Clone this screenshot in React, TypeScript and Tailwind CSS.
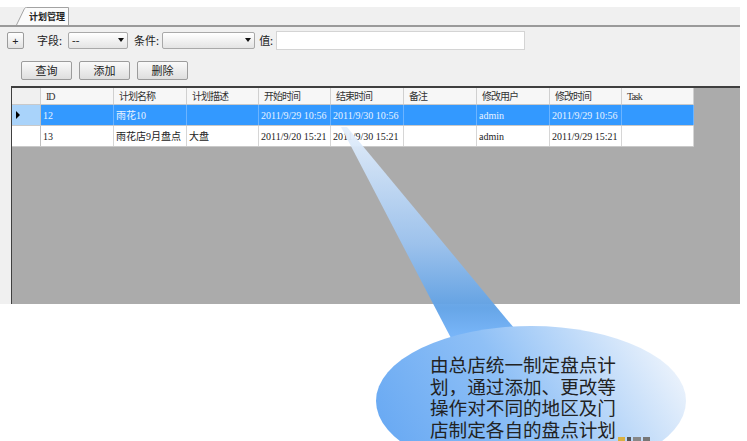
const cols = [
  { title: "ID", w: 73 },
  { title: "计划名称", w: 73 },
  { title: "计划描述", w: 72 },
  { title: "开始时间", w: 72 },
  { title: "结束时间", w: 73 },
  { title: "备注", w: 73 },
  { title: "修改用户", w: 73 },
  { title: "修改时间", w: 72 },
  { title: "Task", w: 72 },
];

const rows = [
  ["12", "雨花10", "", "2011/9/29 10:56", "2011/9/30 10:56", "", "admin", "2011/9/29 10:56", ""],
  ["13", "雨花店9月盘点", "大盘", "2011/9/20 15:21", "2011/9/30 15:21", "", "admin", "2011/9/29 15:21", ""],
];

const ui = { fontFamily: '"Liberation Serif", "Noto Sans CJK SC", serif' };
const cjk = { fontFamily: '"Noto Sans CJK SC", "Liberation Sans", sans-serif' };

const Select = ({ w, value }: { w: string; value?: string }) => (
  <div
    className={`${w} h-[17px] flex items-center justify-between px-[3px] rounded-[2px] border border-[#a9a9a9] bg-gradient-to-b from-white to-[#e4e4e4]`}
  >
    <span className="text-[11px] leading-none text-[#111]" style={ui}>
      {value}
    </span>
    <span className="w-0 h-0 border-l-[3px] border-r-[3px] border-t-[4px] border-l-transparent border-r-transparent border-t-[#111]" />
  </div>
);

const Btn = ({ label }: { label: string }) => (
  <div
    className="w-[51px] h-[19px] flex items-center justify-center rounded-[2px] border border-[#9c9c9c] bg-gradient-to-b from-[#fafafa] to-[#dedede] text-[11px] text-[#222]"
    style={cjk}
  >
    {label}
  </div>
);

export default function App() {
  return (
    <div className="relative w-[747px] h-[441px] bg-white overflow-hidden">
      <div className="pt-[7px]">
        <div className="w-[740px] h-[297px] bg-[#f0f0f0] flex flex-col">
          {/* tab strip */}
          <div className="h-[18px] flex items-end">
            <div className="relative ml-[16px] w-[53px] h-[18px] flex items-center">
              <svg className="absolute inset-0" width="53" height="18" viewBox="0 0 53 18">
                <path d="M0.5 18 L8.5 1.5 Q9.2 0.5 10.5 0.5 L52.5 0.5 L52.5 18" fill="#fbfbfb" stroke="#a3a3a3" />
              </svg>
              <span className="relative ml-[13px] text-[9px] font-bold leading-none text-[#222]" style={cjk}>
                计划管理
              </span>
            </div>
          </div>
          <div className="h-[2px] bg-[#9a9a9a]" />

          {/* filter row */}
          <div className="mt-[4px] h-[18px] flex items-center">
            <div className="ml-[7px] w-[17px] h-[17px] flex items-center justify-center rounded-[2px] border border-[#9c9c9c] bg-gradient-to-b from-white to-[#e2e2e2] text-[11px] leading-none text-[#222]">
              +
            </div>
            <span className="ml-[13px] text-[11px] text-[#222]" style={cjk}>
              字段:
            </span>
            <div className="ml-[6px]">
              <Select w="w-[60px]" value="--" />
            </div>
            <span className="ml-[6px] text-[11px] text-[#222]" style={cjk}>
              条件:
            </span>
            <div className="ml-[3px]">
              <Select w="w-[93px]" />
            </div>
            <span className="ml-[4px] text-[11px] text-[#222]" style={cjk}>
              值:
            </span>
            <div className="ml-[3px] w-[249px] h-[19px] bg-white border border-[#d4d4d4]" />
          </div>

          {/* buttons */}
          <div className="mt-[12px] flex gap-[7px] pl-[21px]">
            <Btn label="查询" />
            <Btn label="添加" />
            <Btn label="删除" />
          </div>

          {/* grid */}
          <div className="mt-[6px] ml-[11px] flex-1 bg-[#ababab] border-t-2 border-l border-[#3f3f3f] text-[10px]" style={ui}>
            <div className="flex h-[17px] bg-[#f7f7f7] border-b border-[#c9c9c9] w-max">
              <div className="w-[29px] border-r border-[#d0d0d0] bg-[#f0f0f0]" />
              {cols.map((c) => (
                <div
                  key={c.title}
                  className="flex items-center pl-[5px] border-r border-[#d0d0d0] tracking-[-1px] text-[#333]"
                  style={{ width: c.w }}
                >
                  {c.title}
                </div>
              ))}
            </div>
            {rows.map((r, i) => {
              const sel = i === 0;
              return (
                <div key={i} className={`flex h-[21px] w-max border-b border-[#c9c9c9] ${sel ? "bg-[#3399ff]" : "bg-white"}`}>
                  <div className={`w-[29px] flex items-center pl-[4px] border-r border-[#c0c0c0] ${sel ? "bg-[#a9d3fa]" : "bg-white"}`}>
                    {sel && (
                      <span className="w-0 h-0 border-t-[4px] border-b-[4px] border-l-[4px] border-t-transparent border-b-transparent border-l-black" />
                    )}
                  </div>
                  {r.map((v, j) => (
                    <div
                      key={j}
                      className={`flex items-center pl-[2px] whitespace-nowrap overflow-hidden border-r ${
                        sel ? "border-[#6cb4ff] text-[#e8f3ff]" : "border-[#d6d6d6] text-[#222]"
                      }`}
                      style={{ width: cols[j].w }}
                    >
                      {v}
                    </div>
                  ))}
                </div>
              );
            })}
          </div>
        </div>
      </div>

      {/* callout */}
      <svg className="absolute left-0 top-0 pointer-events-none" width="747" height="441" viewBox="0 0 747 441">
        <defs>
          <linearGradient id="bubble" x1="0" y1="0.6" x2="1" y2="0.3">
            <stop offset="0" stopColor="#6aaaf3" />
            <stop offset="0.45" stopColor="#8fc0f6" />
            <stop offset="1" stopColor="#eef4fc" />
          </linearGradient>
          <linearGradient id="tail" x1="0" y1="0" x2="0" y2="1">
            <stop offset="0" stopColor="#e6f0fc" />
            <stop offset="0.55" stopColor="#9cc3ef" />
            <stop offset="0.85" stopColor="#5fa1e6" />
            <stop offset="1" stopColor="#74b4fb" />
          </linearGradient>
        </defs>
        <polygon points="341,127 347,127 524,340 452,340" fill="url(#tail)" opacity="0.95" />
        <ellipse cx="531" cy="401" rx="155" ry="75" fill="url(#bubble)" />
        <rect x="618" y="437" width="7" height="4" fill="#d9b040" />
        <rect x="627" y="437" width="4" height="4" fill="#555" />
        <rect x="633" y="437" width="8" height="4" fill="#888" />
        <rect x="643" y="437" width="7" height="4" fill="#777" />
      </svg>
      <div
        className="absolute left-[430px] top-[353px] w-[195px] text-[18.6px] leading-[21.5px] text-[#222]"
        style={cjk}
      >
        <div>由总店统一制定盘点计</div>
        <div>划，通过添加、更改等</div>
        <div>操作对不同的地区及门</div>
        <div>店制定各自的盘点计划</div>
      </div>
    </div>
  );
}
